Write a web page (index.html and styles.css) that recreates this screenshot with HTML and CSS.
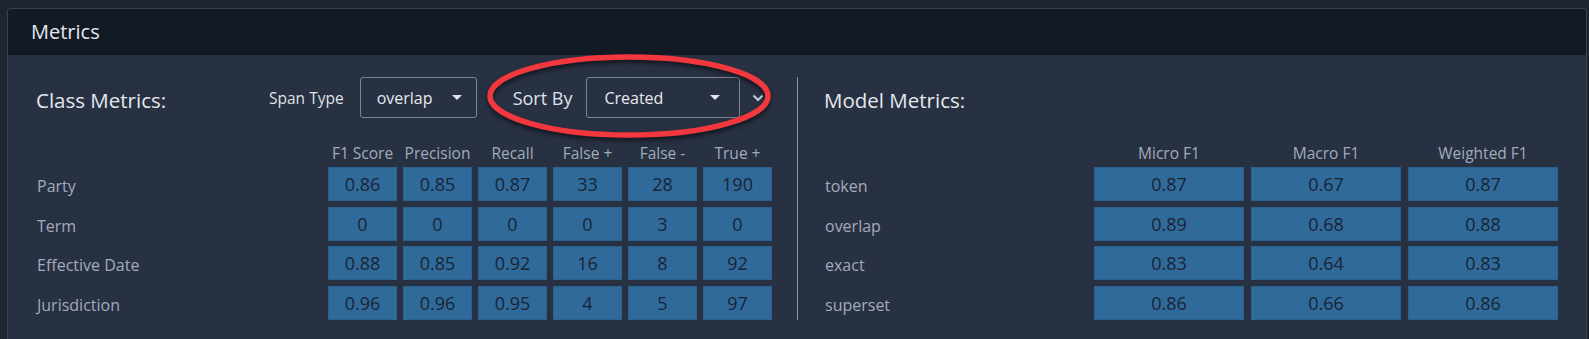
FILE: index.html
```html
<!DOCTYPE html>
<html lang="en">
<head>
  <meta charset="UTF-8" />
  <title>Metrics</title>
  <link rel="stylesheet" href="styles.css">
</head>
<body>
  <div class="panel">
    <div class="panel-header">Metrics</div>

    <div class="panel-body">
      <div class="class-metrics">
        <div class="controls">
          <h2 class="section-title">Class Metrics:</h2>
          <span class="control-label">Span Type</span>
          <div class="select select-span">
            <span>overlap</span>
            <i class="caret"></i>
          </div>
          <span class="control-label sort-label">Sort By</span>
          <div class="select select-sort">
            <span>Created</span>
            <i class="caret"></i>
          </div>
          <svg class="chevron" width="12" height="8" viewBox="0 0 12 8">
            <path d="M1.5 1.5 L6 6 L10.5 1.5" fill="none" stroke="#c5ccd6" stroke-width="2"/>
          </svg>
        </div>

        <div class="grid class-grid">
          <div></div>
          <div class="col-head">F1 Score</div>
          <div class="col-head">Precision</div>
          <div class="col-head">Recall</div>
          <div class="col-head">False +</div>
          <div class="col-head">False -</div>
          <div class="col-head">True +</div>

          <div class="row-label">Party</div>
          <div class="cell">0.86</div><div class="cell">0.85</div><div class="cell">0.87</div>
          <div class="cell">33</div><div class="cell">28</div><div class="cell">190</div>

          <div class="row-label">Term</div>
          <div class="cell">0</div><div class="cell">0</div><div class="cell">0</div>
          <div class="cell">0</div><div class="cell">3</div><div class="cell">0</div>

          <div class="row-label">Effective Date</div>
          <div class="cell">0.88</div><div class="cell">0.85</div><div class="cell">0.92</div>
          <div class="cell">16</div><div class="cell">8</div><div class="cell">92</div>

          <div class="row-label">Jurisdiction</div>
          <div class="cell">0.96</div><div class="cell">0.96</div><div class="cell">0.95</div>
          <div class="cell">4</div><div class="cell">5</div><div class="cell">97</div>
        </div>
      </div>

      <div class="divider"></div>

      <div class="model-metrics">
        <div class="controls">
          <h2 class="section-title">Model Metrics:</h2>
        </div>

        <div class="grid model-grid">
          <div></div>
          <div class="col-head">Micro F1</div>
          <div class="col-head">Macro F1</div>
          <div class="col-head">Weighted F1</div>

          <div class="row-label">token</div>
          <div class="cell">0.87</div><div class="cell">0.67</div><div class="cell">0.87</div>

          <div class="row-label">overlap</div>
          <div class="cell">0.89</div><div class="cell">0.68</div><div class="cell">0.88</div>

          <div class="row-label">exact</div>
          <div class="cell">0.83</div><div class="cell">0.64</div><div class="cell">0.83</div>

          <div class="row-label">superset</div>
          <div class="cell">0.86</div><div class="cell">0.66</div><div class="cell">0.86</div>
        </div>
      </div>
    </div>
  </div>

  <!-- annotation drawn over the sort control -->
  <svg class="highlight" width="296" height="96" viewBox="0 0 296 96">
    <ellipse cx="145" cy="45" rx="139" ry="39" fill="none" stroke="#f2383e" stroke-width="5.5"/>
  </svg>
</body>
</html>
```

FILE: styles.css
```css
* {
  margin: 0;
  padding: 0;
  box-sizing: border-box;
}

body {
  font-family: 'Open Sans', 'Noto Sans', sans-serif;
  background: #1e2531;
  width: 1589px;
  height: 339px;
  overflow: hidden;
  position: relative;
  padding: 8px 0 0 7px;
}

.panel {
  width: 1580px;
  height: 340px;
  border: 1px solid #39424f;
  border-bottom: none;
  border-radius: 4px 4px 0 0;
  background: #283142;
  overflow: hidden;
}

.panel-header {
  height: 46px;
  background: #121a26;
  color: #e3e7ed;
  font-size: 20px;
  line-height: 46px;
  padding-left: 23px;
}

.panel-body {
  display: flex;
}

.class-metrics {
  width: 789px;
  padding: 22px 0 0 28px;
}

.controls {
  display: flex;
  align-items: center;
  height: 41px;
}

.section-title {
  font-size: 20.5px;
  font-weight: 400;
  color: #e4e8ee;
  position: relative;
  top: 2px;
}

.class-metrics .section-title {
  width: 233px;
}

.control-label {
  font-size: 15.5px;
  color: #dfe3ea;
  margin-right: 16px;
}

.sort-label {
  font-size: 18px;
  margin-left: 36px;
  margin-right: 14px;
}

.select {
  height: 41px;
  border: 1px solid #7b8595;
  border-radius: 3px;
  display: flex;
  align-items: center;
  justify-content: space-between;
  color: #e6e9ee;
  font-size: 16px;
}

.select-span {
  width: 117px;
  padding: 0 14px 0 16px;
}

.select-sort {
  width: 154px;
  padding: 0 19px 0 17px;
}

.caret {
  width: 0;
  height: 0;
  border-left: 5px solid transparent;
  border-right: 5px solid transparent;
  border-top: 5px solid #dfe3ea;
}

.chevron {
  margin-left: 12px;
}

.grid {
  display: grid;
  grid-template-rows: 18px repeat(4, 34px);
  row-gap: 5.4px;
  margin-top: 26px;
}

.class-grid {
  grid-template-columns: 285px repeat(6, 69px);
  column-gap: 6px;
  padding-left: 1px;
}

.model-grid {
  grid-template-columns: 262px repeat(3, 150px);
  column-gap: 7px;
  padding-left: 1px;
}

.col-head {
  font-size: 15.5px;
  color: #a2abba;
  text-align: center;
  line-height: 18px;
  white-space: nowrap;
}

.row-label {
  font-size: 16px;
  color: #a2abba;
  display: flex;
  align-items: center;
  padding-top: 4px;
}

.cell {
  background: #2f6a9a;
  border: 1px solid #2b6190;
  color: #1a2434;
  font-size: 18px;
  display: flex;
  align-items: center;
  justify-content: center;
}

.divider {
  width: 1px;
  height: 243px;
  margin-top: 22px;
  background: #8a93a2;
}

.model-metrics {
  padding: 22px 0 0 26px;
}

.highlight {
  position: absolute;
  left: 484px;
  top: 51px;
  filter: drop-shadow(0 3px 2px rgba(0, 0, 0, 0.55));
}
```
